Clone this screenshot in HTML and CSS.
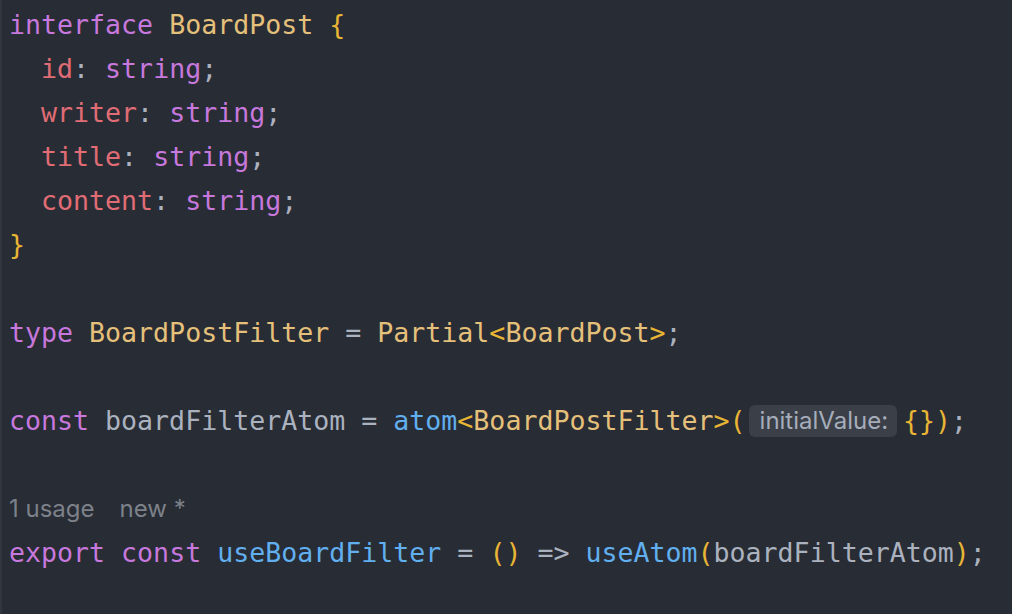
FILE: index.html
```html
<!DOCTYPE html>
<html>
<head>
<meta charset="utf-8">
<link rel="stylesheet" href="styles.css">
</head>
<body>
<div class="editor">
  <div class="line"><span class="kw">interface</span> <span class="ty">BoardPost</span> <span class="br">{</span></div>
  <div class="line">  <span class="pr">id</span><span class="pn">:</span> <span class="kw">string</span><span class="pn">;</span></div>
  <div class="line">  <span class="pr">writer</span><span class="pn">:</span> <span class="kw">string</span><span class="pn">;</span></div>
  <div class="line">  <span class="pr">title</span><span class="pn">:</span> <span class="kw">string</span><span class="pn">;</span></div>
  <div class="line">  <span class="pr">content</span><span class="pn">:</span> <span class="kw">string</span><span class="pn">;</span></div>
  <div class="line"><span class="br">}</span></div>
  <div class="line"> </div>
  <div class="line"><span class="kw">type</span> <span class="ty">BoardPostFilter</span> <span class="pn">=</span> <span class="ty">Partial</span><span class="br">&lt;</span><span class="ty">BoardPost</span><span class="br">&gt;</span><span class="pn">;</span></div>
  <div class="line"> </div>
  <div class="line"><span class="kw">const</span> <span class="tx">boardFilterAtom</span> <span class="pn">=</span> <span class="fn">atom</span><span class="br">&lt;</span><span class="ty">BoardPostFilter</span><span class="br">&gt;(</span><span class="hint">initialValue:</span><span class="br">{})</span><span class="pn">;</span></div>
  <div class="line"> </div>
  <div class="line meta"><span class="usage">1 usage</span><span class="new">new *</span></div>
  <div class="line"><span class="kw">export</span> <span class="kw">const</span> <span class="fn">useBoardFilter</span> <span class="pn">=</span> <span class="br">()</span> <span class="pn">=&gt;</span> <span class="fn">useAtom</span><span class="br">(</span><span class="tx">boardFilterAtom</span><span class="br">)</span><span class="pn">;</span></div>
</div>
</body>
</html>
```

FILE: styles.css
```css
html, body {
  margin: 0;
  padding: 0;
  background: #282c34;
  width: 1012px;
  height: 614px;
  overflow: hidden;
}

.editor {
  box-sizing: border-box;
  height: 614px;
  border-left: 2px solid #32363e;
  padding: 3px 0 0 7px;
  font-family: "DejaVu Sans Mono", "Liberation Mono", monospace;
  font-size: 26.6px;
  color: #abb2bf;
}

.line {
  height: 44px;
  line-height: 44px;
  white-space: pre;
}

.kw { color: #c678dd; }
.ty { color: #e5c07b; }
.pr { color: #e06c75; }
.pn { color: #abb2bf; }
.tx { color: #abb2bf; }
.fn { color: #61afef; }
.br { color: #e8b634; }

.hint {
  display: inline-block;
  font-family: Inter, "Noto Sans", sans-serif;
  font-size: 24px;
  line-height: 32px;
  height: 32px;
  padding: 0 9px 0 11px;
  margin: 0 6px 0 3px;
  border-radius: 6px;
  background: #3a3f48;
  color: #a6adba;
  vertical-align: 1px;
}

.meta {
  font-family: Inter, "Noto Sans", sans-serif;
  font-size: 24px;
  color: #7c818a;
  display: flex;
  gap: 25px;
  align-items: center;
}
```
